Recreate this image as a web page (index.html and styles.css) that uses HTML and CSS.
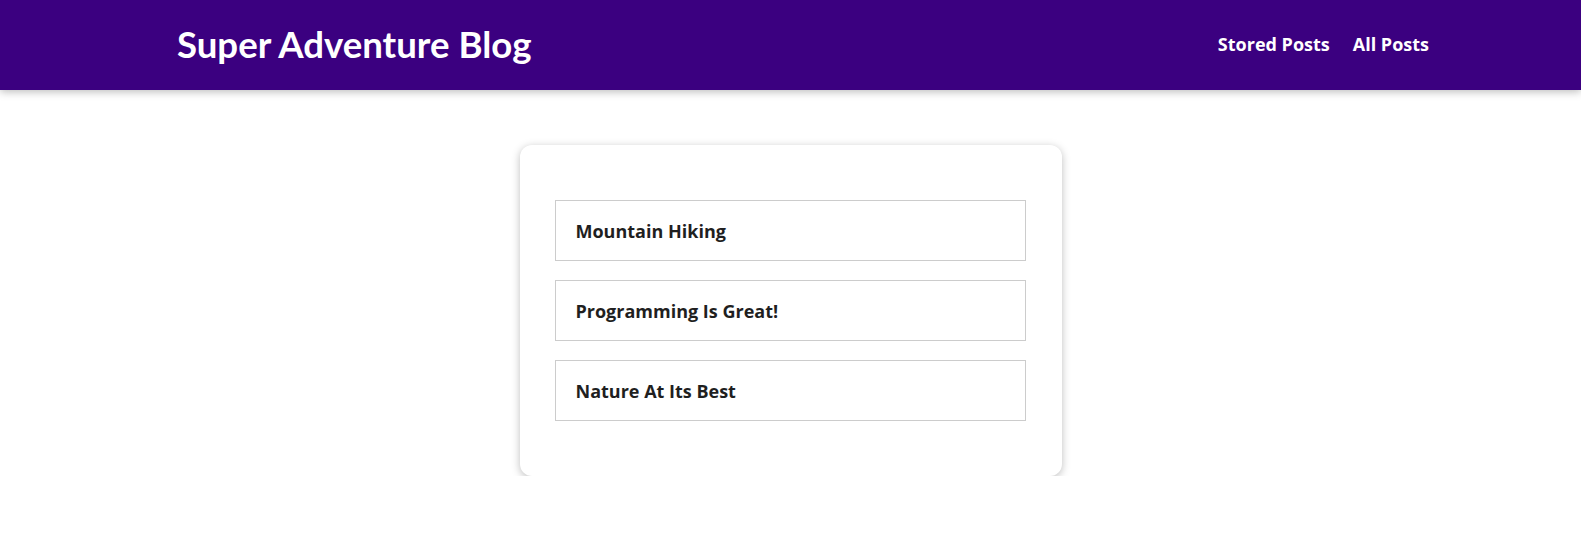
FILE: index.html
```html
<!DOCTYPE html>
<html>
<head>
<meta charset="utf-8">
<link rel="stylesheet" href="styles.css">
</head>
<body>
<header class="main-header">
  <div class="logo">Super Adventure Blog</div>
  <nav class="nav">
    <a href="#">Stored Posts</a>
    <a href="#">All Posts</a>
  </nav>
</header>
<main class="main">
  <section class="card">
    <ul class="post-list">
      <li class="post-item">Mountain Hiking</li>
      <li class="post-item">Programming Is Great!</li>
      <li class="post-item">Nature At Its Best</li>
    </ul>
  </section>
</main>
</body>
</html>
```
FILE: styles.css
```css
* { box-sizing: border-box; }
body {
  margin: 0;
  font-family: "Open Sans", sans-serif;
  background: #ffffff;
  color: #1f1f1f;
}
.main-header {
  height: 90px;
  background: #3b0080;
  display: flex;
  align-items: center;
  justify-content: space-between;
  padding: 0 152px 0 177px;
  box-shadow: 0 2px 8px rgba(0,0,0,0.26);
}
.logo {
  font-family: "Lato", sans-serif;
  font-weight: 700;
  font-size: 36.6px;
  color: #ffffff;
  margin-top: -2px;
}
.nav {
  display: flex;
  gap: 23px;
  margin-top: -2px;
}
.nav a {
  color: #ffffff;
  text-decoration: none;
  font-weight: 700;
  font-size: 18px;
}
.main {
  display: flex;
  justify-content: center;
  padding-top: 55px;
}
.card {
  width: 542px;
  background: #fff;
  border-radius: 12px;
  box-shadow: 0 2px 8px rgba(0,0,0,0.26);
  padding: 55px 36px 55px 35px;
}
.post-list {
  list-style: none;
  margin: 0;
  padding: 0;
  display: flex;
  flex-direction: column;
  gap: 19px;
}
.post-item {
  height: 61px;
  border: 1px solid #cccccc;
  display: flex;
  align-items: center;
  padding: 0 20px;
  font-weight: 700;
  font-size: 18px;
  color: #1f1f1f;
}
```
